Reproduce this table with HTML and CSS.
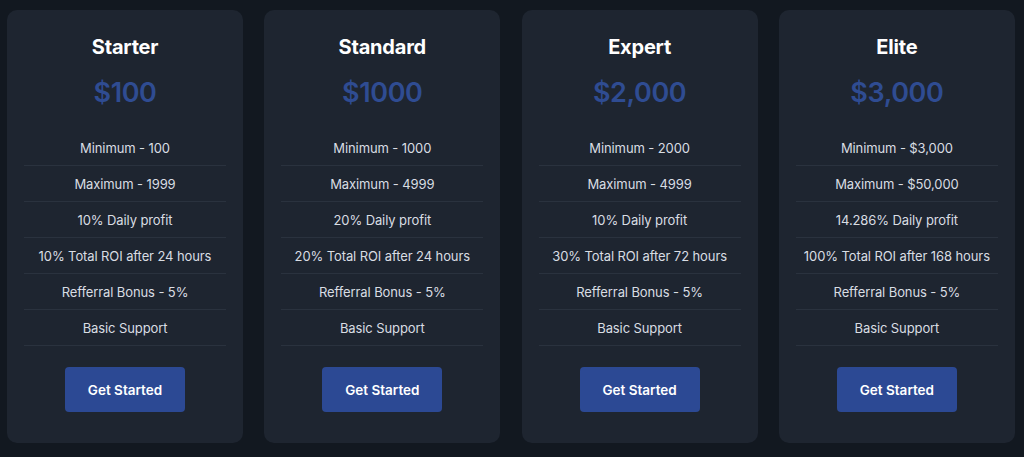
FILE: index.html
```html
<!DOCTYPE html>
<html lang="en">
<head>
<meta charset="utf-8">
<title>Plans</title>
<link rel="stylesheet" href="styles.css">
</head>
<body>
<main class="plans">
  <section class="card">
    <h2 class="title">Starter</h2>
    <div class="price">$100</div>
    <ul class="features">
      <li>Minimum - 100</li>
      <li>Maximum - 1999</li>
      <li>10% Daily profit</li>
      <li>10% Total ROI after 24 hours</li>
      <li>Refferral Bonus - 5%</li>
      <li>Basic Support</li>
    </ul>
    <a class="btn" href="#">Get Started</a>
  </section>
  <section class="card">
    <h2 class="title">Standard</h2>
    <div class="price">$1000</div>
    <ul class="features">
      <li>Minimum - 1000</li>
      <li>Maximum - 4999</li>
      <li>20% Daily profit</li>
      <li>20% Total ROI after 24 hours</li>
      <li>Refferral Bonus - 5%</li>
      <li>Basic Support</li>
    </ul>
    <a class="btn" href="#">Get Started</a>
  </section>
  <section class="card">
    <h2 class="title">Expert</h2>
    <div class="price">$2,000</div>
    <ul class="features">
      <li>Minimum - 2000</li>
      <li>Maximum - 4999</li>
      <li>10% Daily profit</li>
      <li>30% Total ROI after 72 hours</li>
      <li>Refferral Bonus - 5%</li>
      <li>Basic Support</li>
    </ul>
    <a class="btn" href="#">Get Started</a>
  </section>
  <section class="card">
    <h2 class="title">Elite</h2>
    <div class="price">$3,000</div>
    <ul class="features">
      <li>Minimum - $3,000</li>
      <li>Maximum - $50,000</li>
      <li>14.286% Daily profit</li>
      <li>100% Total ROI after 168 hours</li>
      <li>Refferral Bonus - 5%</li>
      <li>Basic Support</li>
    </ul>
    <a class="btn" href="#">Get Started</a>
  </section>
</main>
</body>
</html>
```
FILE: styles.css
```css
* { box-sizing: border-box; }
html, body { margin: 0; padding: 0; }
body {
  background: #121820;
  font-family: "Inter", "Noto Sans", "Liberation Sans", sans-serif;
  color: #d9dde3;
  height: 457px;
  overflow: hidden;
}
.plans {
  display: flex;
  gap: 21.3px;
  padding: 10px 7px 0 7px;
}
.card {
  width: 236px;
  flex: 0 0 236px;
  background: #1e2530;
  border-radius: 10px;
  padding: 25px 17px 31px;
  display: flex;
  flex-direction: column;
  align-items: center;
}
.title {
  margin: 0;
  font-size: 20px;
  line-height: 24px;
  font-weight: 700;
  color: #ffffff;
  letter-spacing: -0.2px;
}
.price {
  margin-top: 16px;
  font-size: 27px;
  line-height: 36px;
  font-weight: 600;
  color: #2f4c92;
  letter-spacing: -0.4px;
}
.features {
  list-style: none;
  margin: 19px 0 0;
  padding: 0;
  width: 100%;
}
.features li {
  height: 36px;
  border-bottom: 1px solid #2a323e;
  display: flex;
  align-items: center;
  justify-content: center;
  font-size: 13px;
  color: #d9dde3;
  letter-spacing: -0.1px;
}
.btn {
  margin-top: 21px;
  width: 120px;
  height: 45px;
  background: #2c4994;
  border-radius: 4px;
  color: #ffffff;
  font-weight: 600;
  font-size: 13.5px;
  text-decoration: none;
  display: flex;
  align-items: center;
  justify-content: center;
}
```
